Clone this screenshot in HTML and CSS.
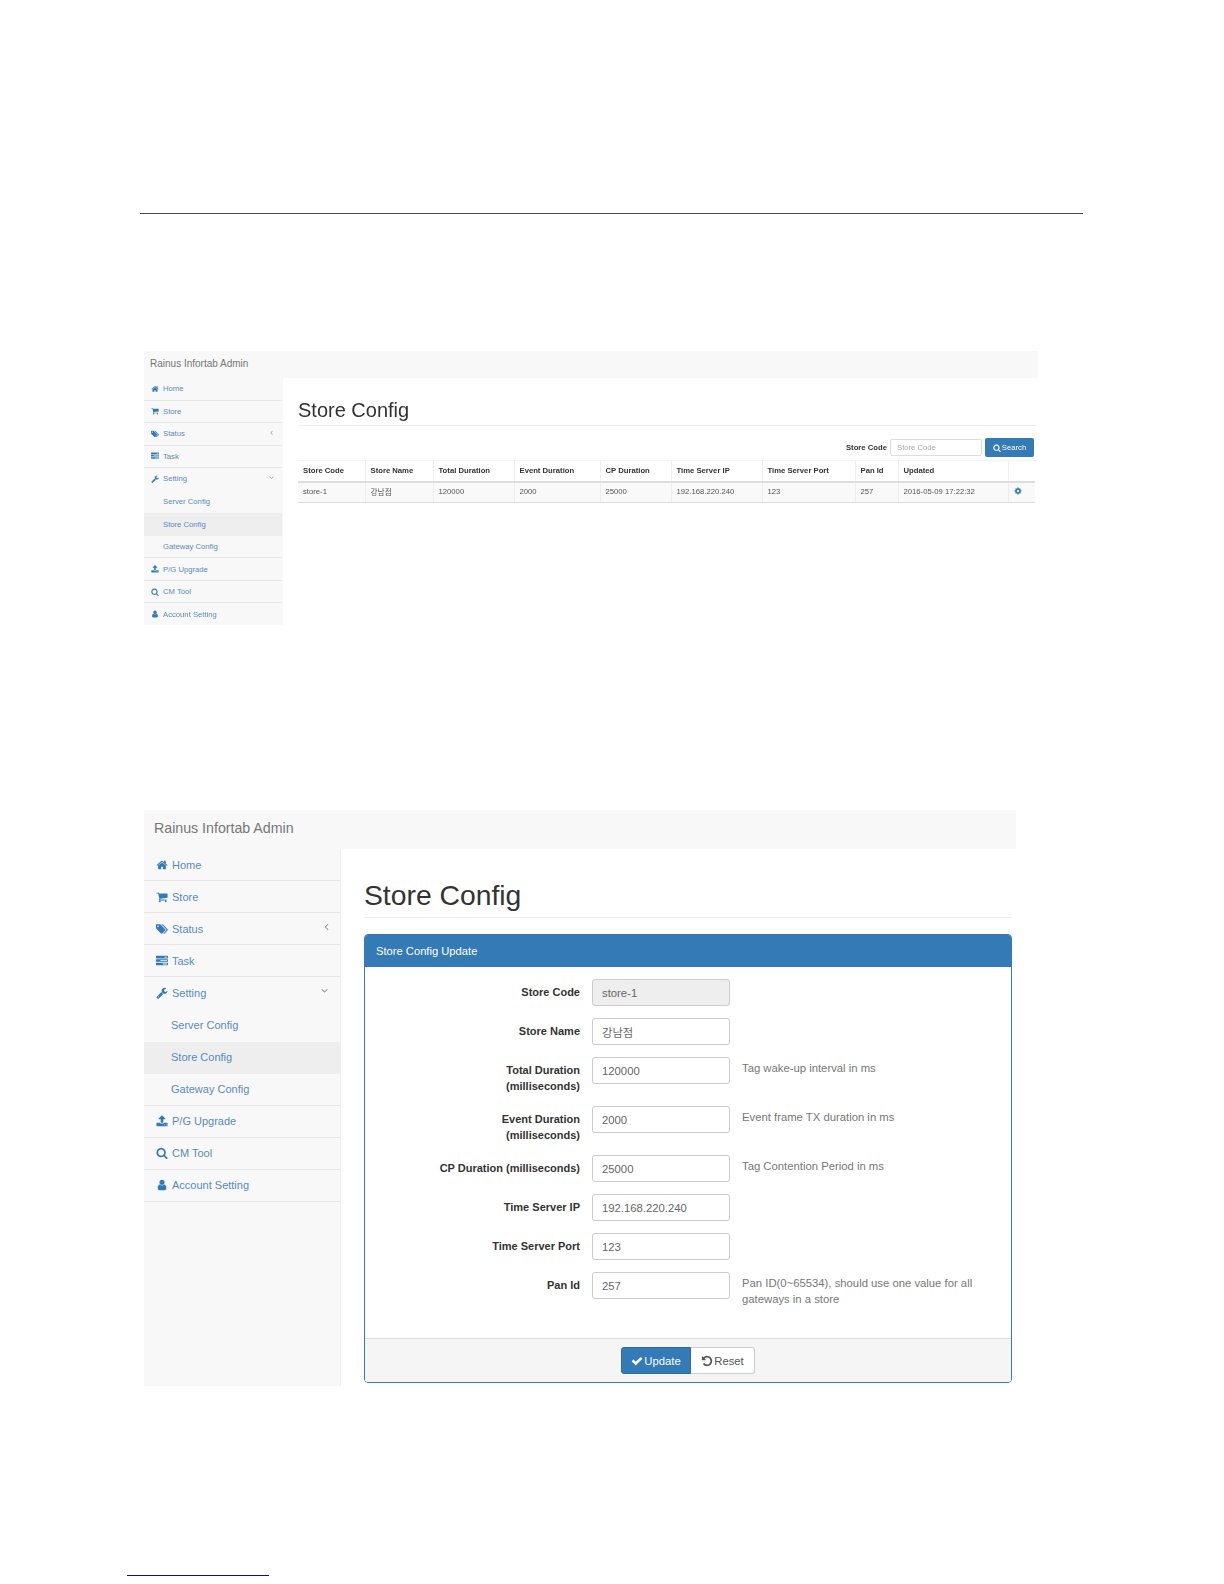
FILE: index.html
```html
<!DOCTYPE html>
<html lang="en">
<head>
<meta charset="utf-8">
<title>Store Config</title>
<link rel="stylesheet" href="styles.css">
</head>
<body>
<svg class="icon-defs" xmlns="http://www.w3.org/2000/svg" aria-hidden="true">
  <symbol id="i-home" viewBox="0 0 1792 1792"><path d="M1472 992v480q0 26-19 45t-45 19h-384v-384h-256v384h-384q-26 0-45-19t-19-45v-480q0-1 .5-3t.5-3l575-474 575 474q1 2 1 6zm223-69l-62 74q-8 9-21 11h-3q-13 0-21-7l-692-577-692 577q-12 8-24 7-13-2-21-11l-62-74q-8-10-7-23.500t11-21.500l719-599q32-26 76-26t76 26l244 204v-195q0-14 9-23t23-9h192q14 0 23 9t9 23v408l219 182q10 8 11 21.500t-7 23.500z"/></symbol>
  <symbol id="i-cart" viewBox="0 0 1792 1792"><path d="M704 1536q0 52-38 90t-90 38-90-38-38-90 38-90 90-38 90 38 38 90zm896 0q0 52-38 90t-90 38-90-38-38-90 38-90 90-38 90 38 38 90zm128-1088v512q0 24-16.500 42.500t-40.500 21.500l-1044 122q13 60 13 70 0 16-24 64h920q26 0 45 19t19 45-19 45-45 19h-1024q-26 0-45-19t-19-45q0-11 8-31.500t16-36 21.500-40 15.500-29.500l-177-823h-204q-26 0-45-19t-19-45 19-45 45-19h256q16 0 28.500 6.500t19.500 15.500 13 24.500 8 26 5.500 29.500 4.500 26h1201q26 0 45 19t19 45z"/></symbol>
  <symbol id="i-tags" viewBox="0 0 1920 1792"><path d="M448 448q0-53-37.500-90.500t-90.500-37.500-90.500 37.500-37.500 90.500 37.500 90.500 90.500 37.500 90.500-37.500 37.500-90.500zm1067 576q0 53-37 90l-491 492q-39 37-91 37-53 0-90-37l-715-716q-38-37-64.500-101t-26.500-117v-416q0-52 38-90t90-38h416q53 0 117 26.500t102 64.500l715 714q37 39 37 91zm384 0q0 53-37 90l-491 492q-39 37-91 37-36 0-59-14t-53-45l470-470q37-37 37-90 0-52-37-91l-715-714q-38-38-102-64.500t-117-26.500h224q53 0 117 26.500t102 64.500l715 714q37 39 37 91z"/></symbol>
  <symbol id="i-tasks" viewBox="0 0 1792 1792"><path d="M1024 1408h640v-128h-640v128zm-384-512h1024v-128h-1024v128zm640-512h384v-128h-384v128zm512 832v256q0 26-19 45t-45 19h-1664q-26 0-45-19t-19-45v-256q0-26 19-45t45-19h1664q26 0 45 19t19 45zm0-512v256q0 26-19 45t-45 19h-1664q-26 0-45-19t-19-45v-256q0-26 19-45t45-19h1664q26 0 45 19t19 45zm0-512v256q0 26-19 45t-45 19h-1664q-26 0-45-19t-19-45v-256q0-26 19-45t45-19h1664q26 0 45 19t19 45z" fill-rule="evenodd"/></symbol>
  <symbol id="i-wrench" viewBox="0 0 1792 1792"><path d="M448 1472q0-26-19-45t-45-19-45 19-19 45 19 45 45 19 45-19 19-45zm644-420l-682 682q-37 37-90 37-52 0-91-37l-106-108q-38-36-38-90 0-53 38-91l681-681q39 98 114.500 173.500t173.500 114.500zm634-435q0 39-23 106-47 134-164.500 217.500t-258.500 83.500q-185 0-316.500-131.500t-131.500-316.500 131.500-316.500 316.500-131.500q58 0 121.500 16.500t107.500 46.500q16 11 16 28t-16 28l-293 169v224l193 107q5-3 79-48.500t135.500-81 70.500-35.500q15 0 23.500 10t8.500 25z"/></symbol>
  <symbol id="i-upload" viewBox="0 0 1792 1792"><path d="M1344 1472q0-26-19-45t-45-19-45 19-19 45 19 45 45 19 45-19 19-45zm256 0q0-26-19-45t-45-19-45 19-19 45 19 45 45 19 45-19 19-45zm128-224v320q0 40-28 68t-68 28h-1472q-40 0-68-28t-28-68v-320q0-40 28-68t68-28h427q21 56 70.500 92t110.500 36h256q61 0 110.500-36t70.500-92h427q40 0 68 28t28 68zm-325-648q-17 40-59 40h-256v448q0 26-19 45t-45 19h-256q-26 0-45-19t-19-45v-448h-256q-42 0-59-40-17-39 14-69l448-448q18-19 45-19t45 19l448 448q31 30 14 69z"/></symbol>
  <symbol id="i-search" viewBox="0 0 1792 1792"><path d="M1216 832q0-185-131.500-316.500t-316.500-131.500-316.500 131.500-131.500 316.500 131.500 316.500 316.500 131.500 316.500-131.500 131.500-316.500zm512 832q0 52-38 90t-90 38q-54 0-90-38l-343-342q-179 124-399 124-143 0-273.500-55.500t-225-150-150-225-55.500-273.500 55.500-273.500 150-225 225-150 273.500-55.500 273.500 55.500 225 150 150 225 55.500 273.500q0 220-124 399l343 343q37 37 37 90z"/></symbol>
  <symbol id="i-user" viewBox="0 0 1792 1792"><path d="M1536 1399q0 109-62.500 187t-150.500 78h-854q-88 0-150.500-78t-62.500-187q0-85 8.500-160.500t31.500-152 58.500-131 94-89 134.500-34.500q131 128 313 128t313-128q76 0 134.500 34.500t94 89 58.500 131 31.500 152 8.500 160.500zm-256-887q0 159-112.500 271.500t-271.500 112.500-271.500-112.500-112.500-271.500 112.500-271.500 271.500-112.500 271.500 112.500 112.500 271.500z"/></symbol>
  <symbol id="i-check" viewBox="0 0 1792 1792"><path d="M1671 566q0 40-28 68l-724 724-136 136q-28 28-68 28t-68-28l-136-136-362-362q-28-28-28-68t28-68l136-136q28-28 68-28t68 28l294 295 656-657q28-28 68-28t68 28l136 136q28 28 28 68z"/></symbol>
  <symbol id="i-undo" viewBox="0 0 1792 1792"><path d="M1664 896q0 156-61 298t-164 245-245 164-298 61q-172 0-327-72.500t-264-204.500q-7-10-6.500-22.500t8.500-20.500l137-138q10-9 25-9 16 2 23 12 73 95 179 147t225 52q104 0 198.500-40.500t163.500-109.500 109.500-163.500 40.500-198.500-40.500-198.500-109.500-163.500-163.500-109.500-198.500-40.500q-98 0-188 35.500t-160 101.500l137 138q31 30 14 69-17 40-59 40h-448q-26 0-45-19t-19-45v-448q0-42 40-59 39-17 69 14l130 129q107-101 244.500-156.500t284.500-55.500q156 0 298 61t245 164 164 245 61 298z"/></symbol>
  <symbol id="i-cog" viewBox="0 0 1792 1792"><path d="M1152 896q0-106-75-181t-181-75-181 75-75 181 75 181 181 75 181-75 75-181zm512-109v222q0 12-8 23t-20 13l-185 28q-19 54-39 91 35 50 107 138 10 12 10 25t-9 23q-27 37-99 108t-94 71q-12 0-26-9l-138-108q-44 23-91 38-16 136-29 186-7 28-36 28h-222q-14 0-24.500-8.500t-11.500-21.500l-28-184q-49-16-90-37l-141 107q-10 9-25 9-14 0-25-11-126-114-165-168-7-10-7-23 0-12 8-23 15-21 51-66.500t54-70.500q-27-50-41-99l-183-27q-13-2-21-12.500t-8-23.500v-222q0-12 8-23t19-13l186-28q14-46 39-92-40-57-107-138-10-12-10-24 0-10 9-23 26-36 98.500-107.500t94.500-71.500q13 0 26 10l138 107q44-23 91-38 16-136 29-186 7-28 36-28h222q14 0 24.500 8.500t11.500 21.500l28 184q49 16 90 37l142-107q9-9 24-9 13 0 25 10 129 119 165 170 7 8 7 22 0 12-8 23-15 21-51 66.500t-54 70.500q26 50 41 98l183 28q13 2 21 12.500t8 23.500z"/></symbol>
  <symbol id="i-left" viewBox="0 0 1792 1792"><path d="M1203 544q0 13-10 23l-393 393 393 393q10 10 10 23t-10 23l-50 50q-10 10-23 10t-23-10l-466-466q-10-10-10-23t10-23l466-466q10-10 23-10t23 10l50 50q10 10 10 23z"/></symbol>
  <symbol id="i-down" viewBox="0 0 1792 1792"><path d="M1395 736q0 13-10 23l-466 466q-10 10-23 10t-23-10l-466-466q-10-10-10-23t10-23l50-50q10-10 23-10t23 10l393 393 393-393q10-10 23-10t23 10l50 50q10 10 10 23z"/></symbol>
</svg>

<main class="doc">
  <hr class="rule-top">

  <section class="shot shot-small">
    <header class="brandbar">Rainus Infortab Admin</header>
    <div class="shot-body">
      <nav class="side">
        <a class="side-item"><svg class="ic"><use href="#i-home"/></svg>Home</a>
        <a class="side-item"><svg class="ic"><use href="#i-cart"/></svg>Store</a>
        <a class="side-item"><svg class="ic"><use href="#i-tags"/></svg>Status<svg class="arrow"><use href="#i-left"/></svg></a>
        <a class="side-item"><svg class="ic"><use href="#i-tasks"/></svg>Task</a>
        <a class="side-item no-line"><svg class="ic"><use href="#i-wrench"/></svg>Setting<svg class="arrow"><use href="#i-down"/></svg></a>
        <a class="side-item sub no-line">Server Config</a>
        <a class="side-item sub no-line active">Store Config</a>
        <a class="side-item sub">Gateway Config</a>
        <a class="side-item"><svg class="ic"><use href="#i-upload"/></svg>P/G Upgrade</a>
        <a class="side-item"><svg class="ic"><use href="#i-search"/></svg>CM Tool</a>
        <a class="side-item"><svg class="ic"><use href="#i-user"/></svg>Account Setting</a>
      </nav>
      <div class="content">
        <h1 class="page-title">Store Config</h1>
        <form class="toolbar">
          <label class="toolbar-label">Store Code</label>
          <input class="toolbar-input" placeholder="Store Code">
          <button type="button" class="btn-search"><svg class="ic-btn"><use href="#i-search"/></svg>Search</button>
        </form>
        <table class="grid">
          <colgroup>
            <col class="c1"><col class="c2"><col class="c3"><col class="c4"><col class="c5"><col class="c6"><col class="c7"><col class="c8"><col class="c9"><col class="c10">
          </colgroup>
          <thead>
            <tr><th>Store Code</th><th>Store Name</th><th>Total Duration</th><th>Event Duration</th><th>CP Duration</th><th>Time Server IP</th><th>Time Server Port</th><th>Pan Id</th><th>Updated</th><th></th></tr>
          </thead>
          <tbody>
            <tr><td>store-1</td><td>강남점</td><td>120000</td><td>2000</td><td>25000</td><td>192.168.220.240</td><td>123</td><td>257</td><td>2016-05-09 17:22:32</td><td><svg class="ic-cog"><use href="#i-cog"/></svg></td></tr>
          </tbody>
        </table>
      </div>
    </div>
  </section>

  <section class="shot shot-large">
    <header class="brandbar">Rainus Infortab Admin</header>
    <div class="shot-body">
      <nav class="side">
        <a class="side-item"><svg class="ic"><use href="#i-home"/></svg>Home</a>
        <a class="side-item"><svg class="ic"><use href="#i-cart"/></svg>Store</a>
        <a class="side-item"><svg class="ic"><use href="#i-tags"/></svg>Status<svg class="arrow arrow-left"><use href="#i-left"/></svg></a>
        <a class="side-item"><svg class="ic"><use href="#i-tasks"/></svg>Task</a>
        <a class="side-item no-line"><svg class="ic"><use href="#i-wrench"/></svg>Setting<svg class="arrow"><use href="#i-down"/></svg></a>
        <a class="side-item sub no-line">Server Config</a>
        <a class="side-item sub no-line active">Store Config</a>
        <a class="side-item sub">Gateway Config</a>
        <a class="side-item"><svg class="ic"><use href="#i-upload"/></svg>P/G Upgrade</a>
        <a class="side-item"><svg class="ic"><use href="#i-search"/></svg>CM Tool</a>
        <a class="side-item"><svg class="ic"><use href="#i-user"/></svg>Account Setting</a>
      </nav>
      <div class="content">
        <h1 class="page-title">Store Config</h1>
        <form class="panel">
          <div class="panel-head">Store Config Update</div>
          <div class="panel-body">
            <div class="row"><label class="row-label">Store Code</label><input class="field" value="store-1" disabled></div>
            <div class="row"><label class="row-label">Store Name</label><input class="field" value="강남점"></div>
            <div class="row"><label class="row-label">Total Duration (milliseconds)</label><input class="field" value="120000"><p class="help">Tag wake-up interval in ms</p></div>
            <div class="row"><label class="row-label">Event Duration (milliseconds)</label><input class="field" value="2000"><p class="help">Event frame TX duration in ms</p></div>
            <div class="row"><label class="row-label">CP Duration (milliseconds)</label><input class="field" value="25000"><p class="help">Tag Contention Period in ms</p></div>
            <div class="row"><label class="row-label">Time Server IP</label><input class="field" value="192.168.220.240"></div>
            <div class="row"><label class="row-label">Time Server Port</label><input class="field" value="123"></div>
            <div class="row"><label class="row-label">Pan Id</label><input class="field" value="257"><p class="help">Pan ID(0~65534), should use one value for all gateways in a store</p></div>
          </div>
          <div class="panel-foot">
            <div class="btn-group">
              <button type="button" class="btn btn-update"><svg class="ic-btn"><use href="#i-check"/></svg>Update</button>
              <button type="button" class="btn btn-reset"><svg class="ic-btn"><use href="#i-undo"/></svg>Reset</button>
            </div>
          </div>
        </form>
      </div>
    </div>
  </section>

  <hr class="rule-foot">
</main>
</body>
</html>
```

FILE: styles.css
```css
* { box-sizing: border-box; }

html, body { margin: 0; padding: 0; background: #fff; }

body {
  font-family: "Liberation Sans", Arial, "Noto Sans CJK KR", sans-serif;
  color: #333;
}

.icon-defs { display: none; }

.doc {
  display: flex;
  flex-direction: column;
  align-items: flex-start;
  height: 1584px;
  padding: 213px 0 0 140px;
}

.rule-top {
  width: 943px;
  height: 1px;
  margin: 0;
  border: 0;
  background: #444a5c;
}

.rule-foot {
  width: 142px;
  height: 1px;
  margin: 189px 0 0 -13px;
  border: 0;
  background: #10108c;
}

/* Screenshot frames */
.shot {
  --side-w: 139px;
  --row-h: 22.55px;
  --fs: 7.7px;
  display: flex;
  flex-direction: column;
  margin-left: 4px;
  font-size: var(--fs);
  overflow: hidden;
}

.shot-small {
  width: 894px;
  height: 274px;
  margin-top: 137px;
  filter: blur(0.4px);
}

.shot-large {
  --side-w: 197px;
  --row-h: 32.1px;
  --fs: 11px;
  width: 872px;
  height: 576px;
  margin-top: 185px;
}

.brandbar {
  flex: none;
  display: flex;
  align-items: center;
  height: 27px;
  padding: 0 0 2px 6px;
  background: #f8f8f8;
  color: #777;
  font-size: 10px;
}

.shot-large .brandbar {
  height: 39px;
  padding: 0 0 4px 10px;
  font-size: 14.2px;
}

.shot-body {
  flex: 1;
  display: flex;
  min-height: 0;
}

/* Sidebar */
.side {
  flex: none;
  width: var(--side-w);
  background: #f8f8f8;
  border-right: 1px solid #eee;
}

.shot-small .side { border-right-color: #f8f8f8; }

.side-item {
  display: flex;
  align-items: center;
  height: var(--row-h);
  padding-left: 7px;
  border-bottom: 1px solid #e7e7e7;
  color: #5a8bb8;
}

.shot-large .side-item { padding-left: 12px; }

.side-item.no-line { border-bottom-color: transparent; }
.side-item.active { background: #eee; }
.side-item.sub { padding-left: 19px; }
.shot-large .side-item.sub { padding-left: 27px; }

.ic {
  flex: none;
  width: 8px;
  height: 8px;
  margin-right: 4px;
  fill: #337ab7;
}

.shot-large .ic {
  width: 12px;
  height: 12px;
  margin-right: 4px;
}

.arrow {
  flex: none;
  width: 7px;
  height: 7px;
  margin: -3px 7px 0 auto;
  fill: #8a8a8a;
}

.shot-large .arrow {
  width: 11px;
  height: 11px;
  margin: -4px 10px 0 auto;
}

.shot-large .arrow-left { margin-right: 8px; }

/* Content */
.content {
  flex: 1;
  min-width: 0;
  padding-left: 15px;
  padding-right: 2px;
}

.shot-large .content {
  padding-left: 23px;
  padding-right: 4px;
}

.page-title {
  height: 48px;
  margin: 0 0 12px;
  padding-top: 21px;
  border-bottom: 1px solid #eee;
  font-size: 20px;
  font-weight: 400;
  line-height: 23px;
}

.shot-large .page-title {
  height: 69px;
  margin-bottom: 16px;
  padding-top: 30px;
  font-size: 28.3px;
  line-height: 32px;
}

/* Toolbar + table (small frame) */
.toolbar {
  display: flex;
  justify-content: flex-end;
  align-items: center;
  height: 19px;
  margin: 0 2px 3px 0;
}

.toolbar-label { margin-right: 3px; font-weight: 700; }

.toolbar-input {
  width: 92px;
  height: 17px;
  margin-right: 3px;
  padding: 0 6px;
  border: 1px solid #ddd;
  border-radius: 2px;
  font: inherit;
}

.toolbar-input::placeholder { color: #aaa; }

.btn-search {
  display: flex;
  align-items: center;
  justify-content: center;
  width: 49px;
  height: 19px;
  padding: 0;
  border: 0;
  border-radius: 2px;
  background: #337ab7;
  color: #fff;
  font: inherit;
}

.ic-btn {
  width: 8px;
  height: 8px;
  margin-right: 1px;
  fill: currentColor;
}

.grid {
  width: 737px;
  border-collapse: collapse;
  table-layout: fixed;
  color: #555;
}

.c1 { width: 67px; }
.c2 { width: 68px; }
.c3 { width: 81px; }
.c4 { width: 86px; }
.c5 { width: 71px; }
.c6 { width: 91px; }
.c7 { width: 93px; }
.c8 { width: 43px; }
.c9 { width: 110px; }
.c10 { width: 27px; }

.grid th,
.grid td {
  height: 21px;
  padding: 0 5px;
  border-left: 1px solid #eee;
  border-right: 1px solid #eee;
  text-align: left;
  white-space: nowrap;
}

.grid th:first-child, .grid td:first-child { border-left: 0; }
.grid th:last-child, .grid td:last-child { border-right: 0; }

.grid th {
  border-top: 1px solid #f2f2f2;
  border-bottom: 2px solid #ddd;
  color: #333;
  font-weight: 700;
}

.grid td {
  padding-bottom: 2px;
  background: #f9f9f9;
  border-bottom: 1px solid #ddd;
}

.ic-cog {
  display: block;
  width: 8px;
  height: 8px;
  fill: #337ab7;
}

/* Panel (large frame) */
.panel {
  display: flex;
  flex-direction: column;
  height: 449px;
  border: 1px solid #337ab7;
  border-radius: 4px;
  overflow: hidden;
}

.panel-head {
  flex: none;
  display: flex;
  align-items: center;
  height: 32px;
  padding-left: 11px;
  background: #337ab7;
  color: #fff;
  font-size: 11.2px;
}

.panel-body {
  flex: 1;
  display: flex;
  flex-direction: column;
  gap: 12px;
  padding-top: 12px;
}

.row {
  display: grid;
  grid-template-columns: 215px 138px 1fr;
  column-gap: 12px;
  align-items: start;
}

.row-label {
  padding: 5px 0 0 65px;
  text-align: right;
  font-weight: 700;
  line-height: 16px;
}

.field {
  width: 138px;
  height: 27px;
  padding: 0 9px;
  border: 1px solid #ccc;
  border-radius: 3px;
  background: #fff;
  color: #666;
  font-family: inherit;
  font-size: 11.3px;
}

.field:disabled { background: #eee; color: #666; }

.help {
  margin: 3px 36px 0 0;
  color: #777;
  font-size: 11.3px;
  line-height: 16px;
}

.panel-foot {
  flex: none;
  display: flex;
  justify-content: center;
  align-items: center;
  height: 44px;
  border-top: 1px solid #ddd;
  background: #f5f5f5;
}

.btn-group { display: flex; }

.btn {
  display: flex;
  align-items: center;
  justify-content: center;
  height: 27px;
  padding: 0;
  font-family: inherit;
  font-size: 11.3px;
}

.btn .ic-btn { width: 12px; height: 12px; margin-right: 1px; }

.btn-update {
  width: 70px;
  border: 1px solid #2e6da4;
  border-radius: 3px 0 0 3px;
  background: #337ab7;
  color: #fff;
}

.btn-reset {
  width: 64px;
  border: 1px solid #ccc;
  border-left: 0;
  border-radius: 0 3px 3px 0;
  background: #fff;
  color: #555;
}
```
